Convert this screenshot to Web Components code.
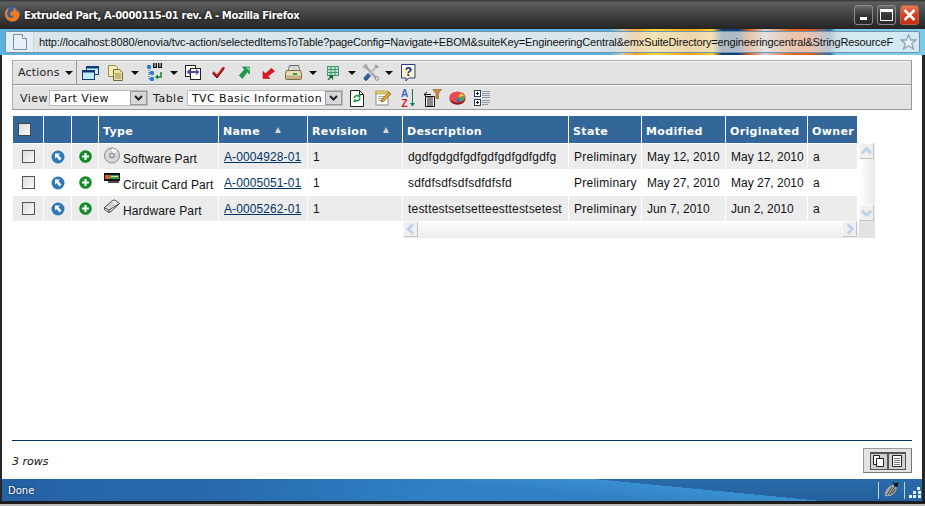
<!DOCTYPE html>
<html>
<head>
<meta charset="utf-8">
<title>Extruded Part</title>
<style>
html, body{ margin: 0; padding: 0; height: 100%; overflow: hidden; background: #fff; }
body{ font-family: "Liberation Sans", Arial, sans-serif; font-size: 12px; }
</style>
</head>
<body>
<script>
const ICONS = {
    windows: `<svg width="17" height="14" viewBox="0 0 17 14"><rect x="4.5" y=".5" width="12" height="8" fill="#cdf4fb" stroke="#123a78"/><rect x="4.5" y=".5" width="12" height="2" fill="#123a78"/><rect x=".5" y="4.5" width="12" height="9" fill="#bfeefa" stroke="#123a78"/><rect x=".5" y="4.5" width="12" height="2" fill="#123a78"/></svg>`,
    copy: `<svg width="15" height="16" viewBox="0 0 15 16"><path d="M.5.5h7l2 2v9H.5z" fill="#f5eebc" stroke="#9a8b45"/><path d="M5.5 4.5h6l3 3v8h-9z" fill="#ece3a8" stroke="#7a6c2c"/><path d="M7 9h6M7 11h6M7 13h6" stroke="#9a8b45"/></svg>`,
    tree: `<svg width="18" height="19" viewBox="0 0 18 19"><rect x="7" y="0" width="4" height="5" fill="#111"/><rect x="12" y="0" width="4" height="5" fill="#111"/><path d="M8 1h2M8 3h2M13 1h2M13 3h2" stroke="#fff"/><path d="M3 5v11M3 10h4M3 16h4" stroke="#2b5fa8" stroke-dasharray="1 1"/><circle cx="3" cy="4" r="2.2" fill="#2d7fc8"/><circle cx="6" cy="10" r="2.2" fill="#2d7fc8"/><circle cx="6" cy="16" r="2.2" fill="#2d7fc8"/><path d="M15 9v5h-4" fill="none" stroke="#1a7d2e" stroke-width="1.5"/><path d="M12 11.500l-3 2.500 3 2.500z" fill="#1a7d2e"/></svg>`,
    compare: `<svg width="16" height="15" viewBox="0 0 16 15"><rect x=".5" y=".5" width="10" height="11" fill="#fff" stroke="#222"/><rect x="5.500" y="3.500" width="10" height="11" fill="#fff" stroke="#222"/><path d="M3 7h10" stroke="#5a4aa8" stroke-width="2"/><path d="M5 4l-3.500 3 3.500 3zM11 4l3.500 3-3.500 3z" fill="#5a4aa8"/></svg>`,
    check: `<svg width="13" height="11" viewBox="0 0 13 11"><path d="M1 6l4 4 7-9" fill="none" stroke="#111" stroke-width="2"/><path d="M1 5l4 4 7-9" fill="none" stroke="#d8171e" stroke-width="2"/></svg>`,
    arrowGreen: `<svg width="13" height="13" viewBox="0 0 13 13"><path d="M5.500 1h7v7l-2.200-2.200-5 6.700-3-3 5.400-6z" fill="#17a04a" stroke="#0d6a30" stroke-width=".6"/><path d="M9 1.500h3.500V5z" fill="#8fe0a8"/></svg>`,
    arrowRed: `<svg width="13" height="13" viewBox="0 0 13 13"><path d="M1 5.500V12.500h7l-2.200-2.200 6.700-5-3-3-6 5.400z" fill="#e3141e" stroke="#a50f14" stroke-width=".6"/></svg>`,
    printer: `<svg width="17" height="15" viewBox="0 0 17 15"><path d="M4.500.5h9l1 5h-11z" fill="#fff" stroke="#666"/><path d="M5.500 2h7M5.500 4h7" stroke="#aaa"/><path d="M1.500 5.500h14l1 3v5a1 1 0 0 1-1 1h-14a1 1 0 0 1-1-1v-5z" fill="#e8dcb8" stroke="#7a6a48"/><rect x="1" y="10.500" width="15" height="3.500" fill="#c7b283"/><rect x="8" y="8" width="4" height="2" fill="#27a340"/></svg>`,
    tableGreen: `<svg width="12" height="14" viewBox="0 0 12 14"><path d="M0 0h12v10H0z" fill="#c7dfd0"/><path d="M.5 0v10M4 0v10M8 0v10M11.500 0v10M0 .5h12M0 3.500h12M0 6.500h12M0 9.500h12" stroke="#3d9a6a"/><path d="M1 14l4-4M2 10h3.500v3.500" fill="none" stroke="#0d6a30" stroke-width="1.300"/></svg>`,
    tools: `<svg width="17" height="17" viewBox="0 0 17 17"><path d="M3 3l11 12" stroke="#a0a6ac" stroke-width="2.400"/><path d="M3.500.5a3 3 0 0 0-3 3l2.500.5 1-1z" fill="#b4b9be" stroke="#777" stroke-width=".5"/><path d="M14.500 1.500L6.500 10" stroke="#b8bcc2" stroke-width="2.200"/><path d="M12.500 .5l3.500 3-2 .5-2.500-2z" fill="#8f959c"/><path d="M5 9.500L1.200 13.500a2 2 0 0 0 2.600 2.700L7.500 12z" fill="#2f5fa6" stroke="#173a70" stroke-width=".6"/><circle cx="14" cy="14.500" r="1.800" fill="#e3e3e3" stroke="#8a9098"/></svg>`,
    help: `<svg width="15" height="18" viewBox="0 0 15 18"><path d="M.5.500h13.500v13.500H7.500l-2.500 3v-3H.5z" fill="#fbf3c2" stroke="#23408a"/><path d="M1.500 1.500h11.500v3H1.500z" fill="#fff"/><text x="7.300" y="11.800" font-family="Liberation Sans" font-weight="700" font-size="12" text-anchor="middle" fill="#12208a">?</text></svg>`,
    refresh: `<svg width="14" height="17" viewBox="0 0 14 17"><path d="M.5.500h9l4 4v12H.5z" fill="#fff" stroke="#222"/><path d="M9.500.500v4h4" fill="none" stroke="#222"/><path d="M4 8a3 3 0 0 1 5-1.500" fill="none" stroke="#1d9a38" stroke-width="1.600"/><path d="M10 8a3 3 0 0 1-5 2" fill="none" stroke="#1d9a38" stroke-width="1.600"/><path d="M8 4.500l3 1-2 3zM6 12.500l-3-1 2-3z" fill="#1d9a38"/></svg>`,
    edit: `<svg width="16" height="16" viewBox="0 0 16 16"><rect x="1" y="2" width="12" height="13" fill="#fff" stroke="#8a8a7a"/><rect x="1" y="1" width="12" height="3" fill="#e6cf70" stroke="#9a8a40" stroke-width=".6"/><path d="M3 6.500h8M3 8.500h6M3 10.500h4" stroke="#aaa"/><path d="M6 12l1-3 7-7 2 2-7 7z" fill="#e6a52e" stroke="#7a5510" stroke-width=".7"/></svg>`,
    sort: `<svg width="15" height="18" viewBox="0 0 15 18"><text x="0" y="8" font-family="Liberation Sans" font-weight="700" font-size="10" fill="#3a66c8">A</text><text x="0.500" y="17.500" font-family="Liberation Sans" font-weight="700" font-size="10" fill="#c8222e">Z</text><path d="M11.500 0v15" stroke="#117a55"/><path d="M9 14l2.500 3.500L14 14z" fill="#117a55"/></svg>`,
    filter: `<svg width="18" height="18" viewBox="0 0 18 18"><path d="M1.500 7.500h9v10h-9z" fill="#fff" stroke="#111"/><path d="M4 8v9M6 8v9M8 8v9" stroke="#111"/><path d="M0 5.500h7M3 3l-3 2.500 3 2.500" fill="none" stroke="#111"/><path d="M9 .5h8.500l-3 4v5h-2.500v-5z" fill="#c58f3a" stroke="#8a5d1a" stroke-width=".6"/></svg>`,
    chart: `<svg width="17" height="14" viewBox="0 0 17 14"><ellipse cx="8.500" cy="7.500" rx="8" ry="6.200" fill="#96161e"/><ellipse cx="8.500" cy="6" rx="8" ry="5.500" fill="#e84a55"/><path d="M8.500 6L16 6c0 2-3 4.500-6 5z" fill="#49a85a"/><path d="M9 6l3-4 4 3z" fill="#e8c83a"/><path d="M8 6l4 5H8z" fill="#3a6ac8"/></svg>`,
    treeList: `<svg width="16" height="16" viewBox="0 0 16 16"><rect x=".5" y=".5" width="6" height="6" fill="#fff" stroke="#345"/><path d="M2 3.500h3M3.500 2v3" stroke="#123"/><rect x=".5" y="9.500" width="6" height="6" fill="#fff" stroke="#345"/><path d="M2 12.500h3M3.500 11v3" stroke="#123"/><path d="M8 1.500h8M8 3.500h8M8 5.500h8M8 7.500h8M8 10.500h8M8 12.500h8M8 14.500h6" stroke="#8a9aa8"/></svg>`,
    cd: `<svg width="16" height="17" viewBox="0 0 16 17"><circle cx="8" cy="8.500" r="7.500" fill="#d8d8dc" stroke="#858590"/><path d="M8 1.500a7 7 0 0 1 5 2L8 8.500z" fill="#f6f6f6"/><circle cx="8" cy="8.500" r="2.500" fill="#b0b0b8" stroke="#888"/><circle cx="8" cy="8.500" r="1" fill="#fff"/></svg>`,
    board: `<svg width="16" height="10" viewBox="0 0 16 10"><rect x="0" y="0" width="16" height="8" fill="#111"/><rect x="1" y="2" width="5" height="4" fill="#d8622a"/><rect x="6" y="2" width="9" height="4" fill="#2fa060"/><rect x="7" y="3" width="7" height="1" fill="#e8e06a"/><path d="M4 9h11" stroke="#111" stroke-width="1.500"/></svg>`,
    hardware: `<svg width="16" height="14" viewBox="0 0 16 14"><path d="M.5 8.500L8.500 1.500Q10 .5 11.500 1.500L15.500 4.500 7 12.500Q5.500 13.500 4 13L.5 10.500z" fill="#ededed" stroke="#444"/><path d="M.5 8.500L5 11 15.500 4.500M5 11v2.500" fill="none" stroke="#444"/><path d="M3.500 8L9 3.500M5.500 9l5-4" stroke="#aaa"/></svg>`,
    go: `<svg width="14" height="14" viewBox="0 0 14 14"><circle cx="7" cy="7" r="6.500" fill="#2f78b8"/><path d="M4 3.500h5l-1.500 1.700L10.500 8.500 8.500 10.500 5.500 7 4 8.500z" fill="#fff"/></svg>`,
    plus: `<svg width="13" height="13" viewBox="0 0 13 13"><circle cx="6.500" cy="6.500" r="6.300" fill="#148a2c"/><path d="M6.500 3v7M3 6.500h7" stroke="#fff" stroke-width="2.200"/></svg>`,
    beetle: `<svg width="15" height="16" viewBox="0 0 15 16"><path d="M1 14C0 9 5 3 10 3c3 1 3 4 2 6-2 4-6 6-11 5z" fill="#a8a8a8"/><path d="M3 13l5-8M5.500 13l5-8M8 12l3.500-5" stroke="#333" stroke-width=".9"/><circle cx="12" cy="3" r="2" fill="#111"/><path d="M13 2l1-2M10 2L9 0" stroke="#111"/></svg>`
}

customElements.define("app-window", class AppWindow extends HTMLElement{
    constructor(){
        super()
        this.shadow = this.attachShadow({mode: "open"})
        this.shadow.innerHTML = `
            <style>
            :host{
                display: flex;
                flex-direction: column;
                width: 925px;
                height: 506px;
                box-sizing: border-box;
                background: #262626;
                overflow: hidden;
            }
            .body{
                flex: 1;
                min-height: 0;
                display: flex;
                flex-direction: column;
                margin: 0 3px 0 2px;
                background: #fff;
            }
            .foot{
                height: 5px;
                flex: none;
                background: linear-gradient(#1d1d1d 0 3px, #bdbdbd 3px);
            }
            </style>
            <slot name="top"></slot>
            <div class="body"><slot></slot></div>
            <div class="foot"></div>
        `
    }
})

customElements.define("title-bar", class TitleBar extends HTMLElement{
    constructor(){
        super()
        this.shadow = this.attachShadow({mode: "open"})
        this.shadow.innerHTML = `
            <style>
            :host{
                display: flex;
                align-items: center;
                flex: none;
                height: 29px;
                box-sizing: border-box;
                padding: 1px 6px 0 4px;
                background: linear-gradient(#2c2c2c 0, #5e5e5e 2px, #414141 15px, #262626 28px);
                color: #fff;
                font: 700 10px "DejaVu Sans", Verdana, sans-serif;
                letter-spacing: -.36px;
            }
            .name{ margin-left: 4px; flex: 1; white-space: nowrap; text-shadow: 0 0 3px #000; }
            .btn{
                width: 19px;
                height: 20px;
                box-sizing: border-box;
                margin-left: 4px;
                display: flex;
                align-items: center;
                justify-content: center;
                border: 1px solid #8a8a8a;
                border-radius: 3px;
                background: linear-gradient(#6a6a6a, #333 55%, #2a2a2a);
            }
            .close{
                background: linear-gradient(#e87a58, #d8391c 55%, #c8300f);
                border-color: #a9654c;
            }
            </style>
            <svg width="16" height="16" viewBox="0 0 16 16" style="margin-top: -2px">
                <circle cx="8" cy="8" r="7.500" fill="#3a5e9a"/>
                <path d="M5 1.500C2 3 .5 6 1 9c.8 4 4 6.500 7.500 6.500 4 0 7-3 7-7 0-1.500-.5-3-1-4-.2 1-.7 1.500-1.200 1.800C13 4 11.500 2 9 1.500c1 1.500 1.200 3 .2 3.500C7.500 5.500 5.800 6 6 8c.2 1.500 2.500 2.500 4 1.500-.5 2-3 3-5 2C3 10 2.500 7 3.500 5 3.800 4 4.500 2.500 5 1.500z" fill="#ef7d1a"/>
                <path d="M5 1.500C3.500 3 3 5 3.500 7 2.500 5 3.200 3 5 1.500z" fill="#ffd02e"/>
            </svg>
            <span class="name"><slot></slot></span>
            <span class="btn"><svg width="9" height="9"><rect x="1" y="6" width="7" height="3" fill="#fff"/></svg></span>
            <span class="btn"><svg width="13" height="12"><rect x=".5" y="1" width="12" height="10.500" fill="none" stroke="#fff"/><rect x="0" y="0" width="13" height="3" fill="#fff"/></svg></span>
            <span class="btn close"><svg width="13" height="12"><path d="M1.500 1l10 10M11.500 1l-10 10" stroke="#fff" stroke-width="2.600"/></svg></span>
        `
    }
})

customElements.define("url-bar", class UrlBar extends HTMLElement{
    constructor(){
        super()
        this.shadow = this.attachShadow({mode: "open"})
        this.shadow.innerHTML = `
            <style>
            :host{
                display: block;
                flex: none;
                height: 26px;
                box-sizing: border-box;
                padding: 2px 5px 2px 5px;
                background:
                    linear-gradient(90deg,
                    #5cb0de 0, #5cb0de 610px, #c9c7b8 622px, #f2a31e 635px, #ffd83a 655px, #f0a01c 690px,
                    #ffcf30 712px, #12407c 722px, #12407c 738px, #e4641c 750px, #c9d0da 765px, #e86a20 790px,
                    #e8581a 810px, #2a6fb0 830px, #7ccbe9 836px, #7ccbe9 100%);
            }
            .field{
                height: 22px;
                box-sizing: border-box;
                display: flex;
                align-items: center;
                border: 1px solid #6f94a8;
                border-radius: 2px;
                background: linear-gradient(90deg, #dbe6ec 0, #dbe6ec 590px, rgba(236, 234, 230, .72) 620px, rgba(236, 234, 230, .72) 830px, rgba(226, 238, 244, .85) 840px);
                color: #111;
                font: 11px "Liberation Sans", Arial, sans-serif;
                letter-spacing: -.145px;
                overflow: hidden;
            }
            .site{
                height: 100%;
                width: 27px;
                flex: none;
                display: flex;
                align-items: center;
                justify-content: center;
                background: rgba(255, 255, 255, .35);
                border-right: 1px solid #c3d3dd;
                margin-right: 5px;
            }
            .text{ flex: 1; white-space: nowrap; overflow: hidden; }
            .star{ flex: none; margin: 0 2px 0 6px; display: flex; }
            </style>
            <div class="field">
                <span class="site">
                    <svg width="14" height="16" viewBox="0 0 14 16"><path d="M.5.500h9l4 4v11H.5z" fill="#e6f0fa" stroke="#7090b8"/><path d="M9.500.500v4h4" fill="#fff" stroke="#7090b8"/></svg>
                </span>
                <span class="text"><slot></slot></span>
                <span class="star">
                    <svg width="17" height="16" viewBox="0 0 17 16"><path d="M8.500 1l2.200 5h5.300l-4.200 3.400 1.600 5.600-4.900-3.200-4.900 3.200 1.600-5.600L1 6h5.300z" fill="#eaf2f8" stroke="#8fa3b0" stroke-width="1.300"/></svg>
                </span>
            </div>
        `
    }
})

customElements.define("tb-icon", class TbIcon extends HTMLElement{
    constructor(){
        super()
        this.shadow = this.attachShadow({mode: "open"})
        const caret = this.hasAttribute("caret")
        this.shadow.innerHTML = `
            <style>
            :host{
                display: inline-flex;
                flex: none;
                align-items: center;
                line-height: 0;
            }
            .caret{
                width: 0;
                height: 0;
                border: 4px solid transparent;
                border-top: 4px solid #111;
                border-bottom: 0;
            }
            </style>
            ${caret ? `<span class="caret"></span>` : ICONS[this.getAttribute("name")]}
        `
    }
})

customElements.define("tool-bar", class ToolBar extends HTMLElement{
    constructor(){
        super()
        this.shadow = this.attachShadow({mode: "open"})
        this.shadow.innerHTML = `
            <style>
            :host{
                display: flex;
                align-items: center;
                height: 25px;
                box-sizing: border-box;
                background: #e3e3e3;
                border-left: 1px solid #aaa;
                border-right: 1px solid #999;
                border-bottom: 1px solid #999;
                box-shadow: inset 0 1px 0 #f4f4f4;
                color: #222;
                font: 11px "DejaVu Sans", Verdana, sans-serif;
            }
            :host([first]){ border-top: 1px solid #aaa; }
            </style>
            <slot></slot>
        `
    }
})

customElements.define("select-box", class SelectBox extends HTMLElement{
    constructor(){
        super()
        this.shadow = this.attachShadow({mode: "open"})
        this.shadow.innerHTML = `
            <style>
            :host{
                display: inline-flex;
                flex: none;
                height: 16px;
                box-sizing: border-box;
                align-items: center;
                background: #fff;
                border: 1px solid #bbb;
                font: 11px "DejaVu Sans", Verdana, sans-serif;
                letter-spacing: .4px;
                color: #111;
            }
            .val{ flex: 1; padding-left: 4px; white-space: nowrap; overflow: hidden; }
            .drop{
                width: 17px;
                height: 14px;
                box-sizing: border-box;
                flex: none;
                display: flex;
                align-items: center;
                justify-content: center;
                background: #d8d8d8;
                border: 1px solid #999;
            }
            </style>
            <span class="val"><slot></slot></span>
            <span class="drop"><svg width="9" height="6"><path d="M1 1l3.500 3.500L8 1" fill="none" stroke="#222" stroke-width="2"/></svg></span>
        `
    }
})

customElements.define("scroll-btn", class ScrollBtn extends HTMLElement{
    constructor(){
        super()
        this.shadow = this.attachShadow({mode: "open"})
        const paths = {
            up: "M2 10l5-5 5 5",
            down: "M2 5l5 5 5-5",
            left: "M9.500 2.500l-5 5 5 5",
            right: "M5 2.500l5 5-5 5"
        }
        this.shadow.innerHTML = `
            <style>
            :host{
                display: flex;
                flex: none;
                align-items: center;
                justify-content: center;
                width: 15px;
                height: 16px;
                box-sizing: border-box;
                background: #efefef;
                border: 1px solid #fafafa;
                border-right-color: #c4c4c4;
                border-bottom-color: #c4c4c4;
            }
            </style>
            <svg width="14" height="14" viewBox="0 0 14 15"><path d="${paths[this.getAttribute("dir")]}" fill="none" stroke="#bed0ea" stroke-width="3"/></svg>
        `
    }
})

customElements.define("data-table", class DataTable extends HTMLElement{
    constructor(){
        super()
        this.shadow = this.attachShadow({mode: "open"})
        const columns = [
            {label: "Type", sort: false},
            {label: "Name", sort: true},
            {label: "Revision", sort: true},
            {label: "Description"},
            {label: "State"},
            {label: "Modified"},
            {label: "Originated"},
            {label: "Owner"}
        ]
        const rows = JSON.parse(this.getAttribute("rows"))
        let head = `<div class="th"><span class="hcheck"></span></div><div class="th"></div><div class="th"></div>`
        for(let i = 0; i < columns.length; i++){
            head += `<div class="th name">${columns[i].label}${columns[i].sort ? `<i class="tri tri-${i}"></i>` : ""}</div>`
        }
        let body = ""
        for(let i = 0; i < rows.length; i++){
            const r = rows[i]
            const cls = i % 2 ? "td even" : "td"
            body += `
                <div class="${cls} mid"><span class="check"></span></div>
                <div class="${cls} mid">${ICONS.go}</div>
                <div class="${cls} mid">${ICONS.plus}</div>
                <div class="${cls} type"><span class="ticon">${ICONS[r.icon]}</span><span class="ttext">${r.type}</span></div>
                <div class="${cls} link"><a href="#">${r.name}</a></div>
                <div class="${cls}">${r.rev}</div>
                <div class="${cls} desc">${r.desc}</div>
                <div class="${cls} state">${r.state}</div>
                <div class="${cls} date">${r.mod}</div>
                <div class="${cls} date">${r.orig}</div>
                <div class="${cls}">${r.owner}</div>
            `
        }
        this.shadow.innerHTML = `
            <style>
            :host{
                display: block;
                margin: 6px 0 0 1px;
                font: 12px "Liberation Sans", Arial, sans-serif;
                letter-spacing: .1px;
                color: #111;
            }
            .top{ display: flex; align-items: flex-end; }
            .grid{
                display: grid;
                grid-template-columns: 30px 27px 26px 119px 88px 94px 165px 72px 83px 81px 49px;
                grid-template-rows: 27px 25px 25px 25px;
                gap: 1px;
                width: 844px;
            }
            .th{
                background: #336699;
                color: #fff;
                font: 700 11px "DejaVu Sans", Verdana, sans-serif;
                letter-spacing: .35px;
                display: flex;
                align-items: center;
                padding: 3px 0 0 4px;
                box-sizing: border-box;
                white-space: nowrap;
            }
            .tri{
                width: 0;
                height: 0;
                margin: -3px 0 0 11px;
                border: 3px solid transparent;
                border-top: 0;
                border-bottom: 6px solid #d5d5d5;
            }
            .tri-1{ margin-left: 15px; }
            .tri-2{ margin-left: 16px; }
            .hcheck{
                width: 13px;
                height: 13px;
                box-sizing: border-box;
                margin: -3px 0 0 1px;
                background: linear-gradient(135deg, #d9d9d9, #fafafa);
                border: 1px solid #444;
            }
            .td{
                background: #ececec;
                display: flex;
                align-items: center;
                padding-left: 5px;
                white-space: nowrap;
            }
            .td.even{ background: #fff; }
            .td.mid{ justify-content: center; padding-left: 0; }
            .td.type{ align-items: flex-start; }
            .td.desc{ letter-spacing: .2px; }
            .td.state{ letter-spacing: .25px; }
            .td.date{ letter-spacing: 0; }
            .ticon{ width: 19px; height: 20px; flex: none; padding-top: 3px; box-sizing: border-box; }
            .ttext{ padding-top: 8px; }
            .check{
                width: 13px;
                height: 13px;
                box-sizing: border-box;
                margin-left: 1px;
                background: linear-gradient(135deg, #dcdcdc, #fbfbfb);
                border: 1px solid #555;
            }
            a{ color: #003366; }
            .vscroll{
                width: 16px;
                height: 78px;
                margin-left: 2px;
                display: flex;
                flex-direction: column;
                justify-content: space-between;
                background: linear-gradient(90deg, #fff, #eaeaea);
            }
            .bottom{ display: flex; margin-left: 390px; height: 17px; }
            .hscroll{
                width: 456px;
                display: flex;
                justify-content: space-between;
                padding-right: 2px;
                box-sizing: border-box;
                background: linear-gradient(#fff, #eaeaea);
            }
            .corner{ width: 16px; background: #e3e3e3; }
            svg{ display: block; }
            </style>
            <div class="top">
                <div class="grid">${head}${body}</div>
                <div class="vscroll"><scroll-btn dir="up"></scroll-btn><scroll-btn dir="down"></scroll-btn></div>
            </div>
            <div class="bottom">
                <div class="hscroll"><scroll-btn dir="left"></scroll-btn><scroll-btn dir="right"></scroll-btn></div>
                <div class="corner"></div>
            </div>
        `
    }
})

customElements.define("table-foot", class TableFoot extends HTMLElement{
    constructor(){
        super()
        this.shadow = this.attachShadow({mode: "open"})
        this.shadow.innerHTML = `
            <style>
            :host{
                display: flex;
                align-items: flex-start;
                justify-content: space-between;
                flex: none;
                height: 39px;
                box-sizing: border-box;
                margin: auto 10px 0 10px;
                border-top: 1px solid #003366;
                padding-top: 7px;
            }
            .count{
                font: italic 11px "DejaVu Sans", Verdana, sans-serif;
                color: #111;
                padding-top: 7px;
            }
            .modes{
                width: 49px;
                height: 25px;
                box-sizing: border-box;
                display: flex;
                align-items: center;
                justify-content: center;
                background: #e3e3e3;
                border: 1px solid #999;
                border-right-color: #777;
                border-bottom-color: #777;
            }
            .mode{
                width: 16px;
                height: 15px;
                display: flex;
                align-items: center;
                justify-content: center;
                background: #cfcfcf;
                border: 1px solid #555;
                border-top-width: 2px;
            }
            </style>
            <span class="count"><slot></slot></span>
            <div class="modes">
                <span class="mode"><svg width="11" height="12" viewBox="0 0 11 12"><path d="M.5.500h6v9h-6z" fill="#fff" stroke="#222"/><path d="M3.500 3.500h7v8h-7z" fill="#fff" stroke="#222"/></svg></span>
                <span class="mode"><svg width="10" height="12" viewBox="0 0 10 12"><path d="M.5.500h9v11h-9z" fill="#fff" stroke="#222"/><path d="M2 3.500h6M2 5.500h6M2 7.500h6M2 9.500h6" stroke="#777"/></svg></span>
            </div>
        `
    }
})

customElements.define("status-bar", class StatusBar extends HTMLElement{
    constructor(){
        super()
        this.shadow = this.attachShadow({mode: "open"})
        this.shadow.innerHTML = `
            <style>
            :host{
                display: flex;
                align-items: center;
                flex: none;
                height: 22px;
                box-sizing: border-box;
                padding: 0 0 0 6px;
                color: #fff;
                font: 10px "DejaVu Sans", Verdana, sans-serif;
                text-shadow: 0 0 3px #123;
                background:
                    linear-gradient(90deg, rgba(37, 98, 165, 1) 0, rgba(37, 98, 165, .8) 200px, rgba(37, 98, 165, 0) 440px),
                    linear-gradient(185.500deg, transparent 28.500%, #3a90d0 28.700%, #3080c4 45%, #2f82c6 60%),
                    linear-gradient(#2b6ba9, #24609f);
            }
            .label{ flex: 1; }
            .sep{ width: 1px; height: 17px; background: #c4d2e0; }
            .bug{ width: 25px; display: flex; justify-content: center; }
            .grip{ width: 17px; height: 18px; display: flex; align-items: flex-end; justify-content: flex-end; }
            </style>
            <span class="label"><slot></slot></span>
            <span class="sep"></span>
            <span class="bug">${ICONS.beetle}</span>
            <span class="sep"></span>
            <span class="grip">
                <svg width="14" height="13" viewBox="0 0 14 13" fill="#eaf2fa"><rect x="9" y="1" width="3" height="3"/><rect x="5" y="5" width="3" height="3"/><rect x="10" y="5" width="3" height="3"/><rect x="1" y="9" width="3" height="3"/><rect x="5" y="9" width="3" height="3"/><rect x="10" y="9" width="3" height="3"/></svg>
            </span>
        `
    }
})

const rowData = [
    {icon: "cd", type: "Software Part", name: "A-0004928-01", rev: "1", desc: "dgdfgdgdfgdfgdfgdfgdfgdfg", state: "Preliminary", mod: "May 12, 2010", orig: "May 12, 2010", owner: "a"},
    {icon: "board", type: "Circuit Card Part", name: "A-0005051-01", rev: "1", desc: "sdfdfsdfsdfsdfdfsfd", state: "Preliminary", mod: "May 27, 2010", orig: "May 27, 2010", owner: "a"},
    {icon: "hardware", type: "Hardware Part", name: "A-0005262-01", rev: "1", desc: "testtestsetsetteesttestsetest", state: "Preliminary", mod: "Jun 7, 2010", orig: "Jun 2, 2010", owner: "a"}
]
const rowAttr = JSON.stringify(rowData).replace(/"/g, "&quot;")

document.body.innerHTML = `
<app-window>
    <title-bar slot="top">Extruded Part, A-0000115-01 rev. A - Mozilla Firefox</title-bar>
    <url-bar slot="top">http://localhost:8080/enovia/tvc-action/selectedItemsToTable?pageConfig=Navigate+EBOM&amp;suiteKey=EngineeringCentral&amp;emxSuiteDirectory=engineeringcentral&amp;StringResourceF</url-bar>
    <div style="margin: 5px 10px 0 10px; flex: none;">
        <tool-bar first>
            <span style="margin-left: 5px; letter-spacing: .2px; width: 47px;">Actions</span>
            <tb-icon caret></tb-icon>
            <span style="width: 1px; height: 23px; background: #999; margin: 0 5px 0 3px;"></span>
            <tb-icon name="windows"></tb-icon>
            <tb-icon name="copy" style="margin-left: 9px;"></tb-icon>
            <tb-icon caret style="margin-left: 8px;"></tb-icon>
            <tb-icon name="tree" style="margin-left: 7px;"></tb-icon>
            <tb-icon caret style="margin-left: 6px;"></tb-icon>
            <tb-icon name="compare" style="margin-left: 7px;"></tb-icon>
            <tb-icon name="check" style="margin-left: 11px;"></tb-icon>
            <tb-icon name="arrowGreen" style="margin-left: 12px;"></tb-icon>
            <tb-icon name="arrowRed" style="margin-left: 12px;"></tb-icon>
            <tb-icon name="printer" style="margin-left: 10px;"></tb-icon>
            <tb-icon caret style="margin-left: 7px;"></tb-icon>
            <tb-icon name="tableGreen" style="margin-left: 10px;"></tb-icon>
            <tb-icon caret style="margin-left: 9px;"></tb-icon>
            <tb-icon name="tools" style="margin-left: 7px;"></tb-icon>
            <tb-icon caret style="margin-left: 5px;"></tb-icon>
            <tb-icon name="help" style="margin-left: 8px;"></tb-icon>
        </tool-bar>
        <tool-bar style="padding-top: 2px;">
            <span style="margin-left: 7px; letter-spacing: .5px; width: 29px;">View</span>
            <select-box style="width: 99px;">Part View</select-box>
            <span style="margin-left: 5px; letter-spacing: .5px; width: 34px;">Table</span>
            <select-box style="width: 156px;">TVC Basic Information</select-box>
            <tb-icon name="refresh" style="margin-left: 7px;"></tb-icon>
            <tb-icon name="edit" style="margin-left: 11px;"></tb-icon>
            <tb-icon name="sort" style="margin-left: 10px;"></tb-icon>
            <tb-icon name="filter" style="margin-left: 8px;"></tb-icon>
            <tb-icon name="chart" style="margin-left: 7px;"></tb-icon>
            <tb-icon name="treeList" style="margin-left: 8px;"></tb-icon>
        </tool-bar>
    </div>
    <div style="margin-left: 10px; flex: none;">
        <data-table rows="${rowAttr}"></data-table>
    </div>
    <table-foot>3 rows</table-foot>
    <status-bar>Done</status-bar>
</app-window>
`
</script>
</body>
</html>
